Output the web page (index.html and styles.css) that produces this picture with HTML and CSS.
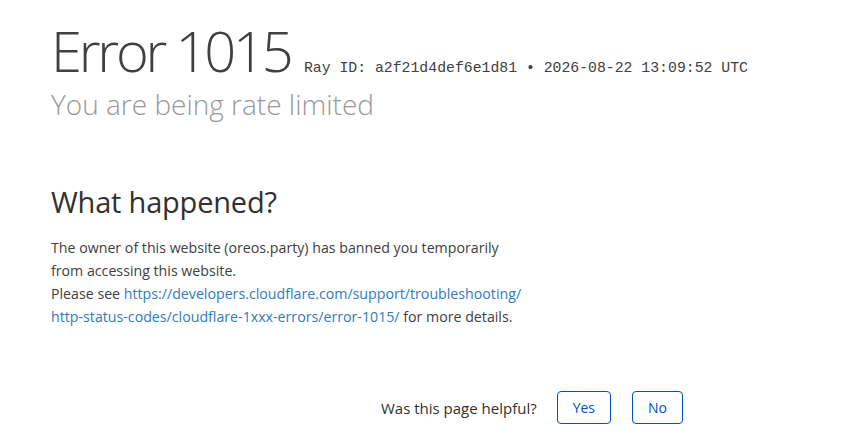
FILE: index.html
```html
<!DOCTYPE html>
<html lang="en">
<head>
    <meta charset="UTF-8">
    <meta name="viewport" content="width=device-width, initial-scale=1.0">
    <title>Attention Required! | Cloudflare</title>
    <link rel="stylesheet" href="styles.css">
</head>

<body>
    <div class="cf-wrapper">
        <!-- Заголовок ошибки -->
        <div class="cf-header">
            <h1>
                <span class="cf-error-type">Error</span>
                <span class="cf-error-code">1015</span>
                <small class="heading-ray-id">Ray ID: a2f21d4def6e1d81 &bull;&nbsp;2026-08-22 13:09:52 UTC</small>
            </h1>
            <h2 class="cf-subheadline">You are being rate limited</h2>
        </div>

        <div class="cf-section">
            <h2>What happened?</h2>
            <p>The owner of this website (oreos.party) has banned you temporarily from accessing this website.</p>
            <p>Please see <a href="#">https://developers.cloudflare.com/support/troubleshooting/<wbr>http-status-codes/cloudflare-1xxx-errors/error-1015/</a> for more details.</p>
        </div>

        <!-- Отзыв о странице -->
        <div class="feedback">
            <span>Was this page helpful?</span>
            <button class="feedback-btn">Yes</button>
            <button class="feedback-btn">No</button>
        </div>
    </div>
</body>
</html>
```

FILE: styles.css
```css
body {
    font-family: "Open Sans", "Noto Sans", sans-serif;
    margin: 0;
    padding: 0;
    background-color: #fff;
    color: #404040;
}

.cf-wrapper {
    padding: 0 51px;
}

.cf-header h1 {
    margin: 0;
    padding-top: 20px;
    font-size: 56px;
    font-weight: 300;
    line-height: 60px;
    letter-spacing: -3.2px;
    color: #404040;
    white-space: nowrap;
}

.heading-ray-id {
    font-family: "Liberation Mono", monospace;
    font-size: 14.8px;
    font-weight: 400;
    line-height: 1;
    letter-spacing: 0;
    color: #404040;
    margin-left: 2px;
}

.cf-subheadline {
    margin: 6px 0 0;
    font-size: 28px;
    font-weight: 300;
    line-height: 36px;
    color: #999;
}

.cf-section {
    margin-top: 62px;
    width: 480px;
}

.cf-section h2 {
    margin: 0 0 16px;
    font-size: 29px;
    font-weight: 400;
    line-height: 36px;
    letter-spacing: -0.2px;
    color: #313131;
}

.cf-section p {
    margin: 0;
    font-size: 14.2px;
    line-height: 23px;
}

.cf-section a {
    color: #2f7bbf;
    text-decoration: none;
}

.feedback {
    display: flex;
    align-items: center;
    justify-content: flex-end;
    margin-top: 63px;
    padding-right: 120px;
    font-size: 15px;
    color: #313131;
}

.feedback span {
    margin-right: 20px;
}

.feedback-btn {
    font-family: inherit;
    font-size: 14px;
    font-weight: 500;
    height: 33px;
    padding: 0 15px;
    margin-left: 21px;
    background-color: #fff;
    border: 1px solid #0051c3;
    color: #0051c3;
    border-radius: 4px;
    cursor: pointer;
}

.feedback span + .feedback-btn {
    margin-left: 0;
}
```
